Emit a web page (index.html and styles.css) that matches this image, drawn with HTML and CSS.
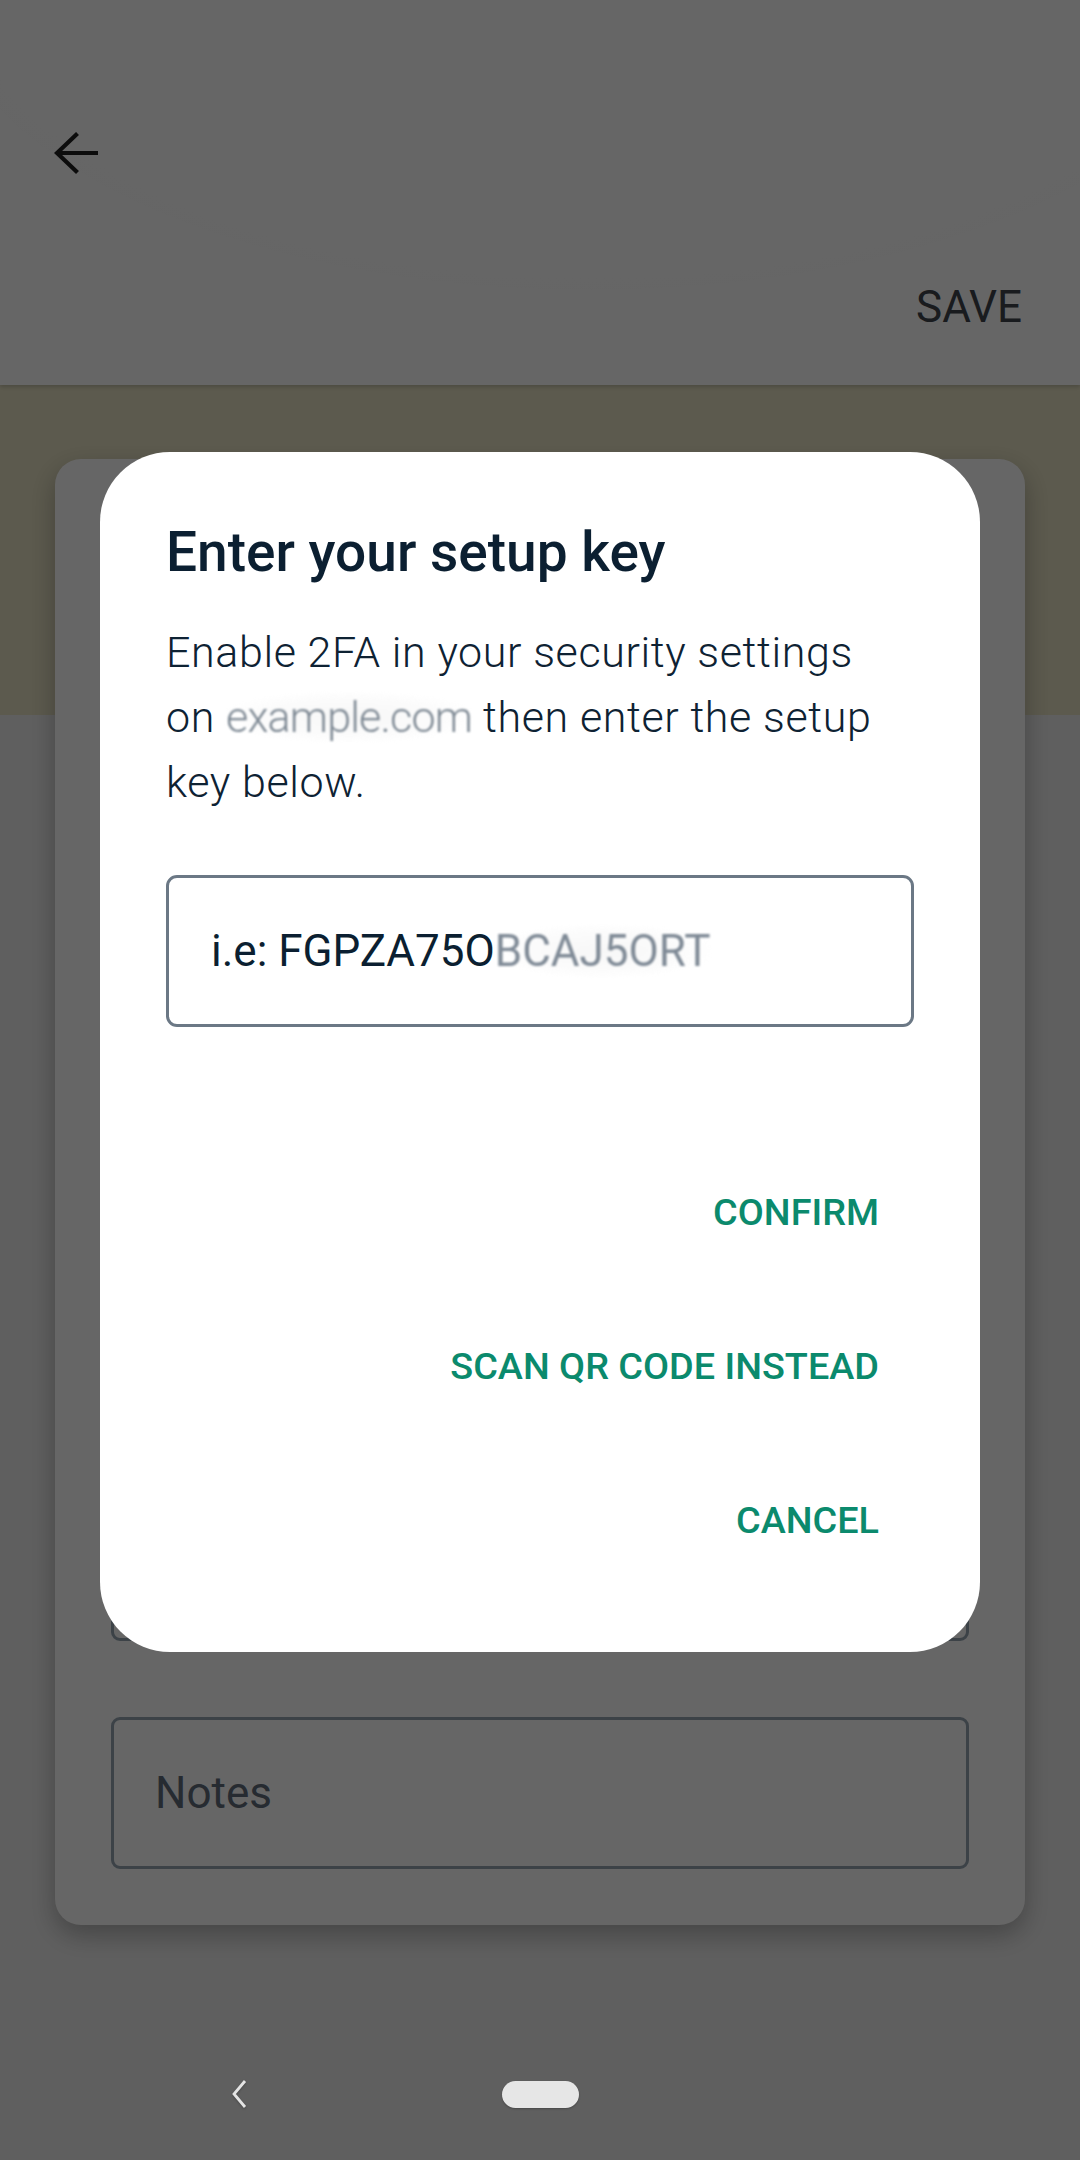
FILE: index.html
```html
<!DOCTYPE html>
<html lang="en">
<head>
<meta charset="utf-8">
<title>Enter your setup key</title>
<link rel="stylesheet" href="styles.css">
</head>
<body>
<div class="screen">
  <header class="appbar">
    <div class="appbar-glow"></div>
    <button class="icon-btn" aria-label="Back">
      <svg class="back-icon" viewBox="0 0 46 44" width="46" height="44">
        <path d="M44 21H3M23.5 1.5L3 21L23.5 40.5" fill="none" stroke="#202020" stroke-width="4.2" stroke-linecap="butt" stroke-linejoin="miter"/>
      </svg>
    </button>
    <div class="appbar-actions">
      <span class="save">SAVE</span>
    </div>
  </header>

  <main class="content">
    <section class="card">
      <div class="field"></div>
      <div class="field"></div>
      <div class="field"></div>
      <div class="field"></div>
      <div class="field"></div>
      <div class="field notes"><span class="field-label">Notes</span></div>
    </section>
  </main>

  <nav class="navbar">
    <svg class="nav-back" viewBox="0 0 18 30" width="18" height="30">
      <path d="M15 2L4 15L15 28" fill="none" stroke="#e4e4e4" stroke-width="2.8"/>
    </svg>
    <span class="nav-home"></span>
    <span></span>
  </nav>
</div>

<div class="scrim">
  <div class="dialog" role="dialog">
    <h1 class="dialog-title">Enter your setup key</h1>
    <p class="dialog-body"><span class="line">Enable 2FA in your security settings</span> <span class="line">on</span> <span class="redacted">example.com</span> <span class="line">then enter the setup</span> <span class="line">key below.</span></p>
    <div class="input">
      <span class="input-text">i.e: FGPZA75O</span><span class="redacted redacted-key">BCAJ5ORT</span>
    </div>
    <div class="actions">
      <button class="text-btn">CONFIRM</button>
      <button class="text-btn">SCAN QR CODE INSTEAD</button>
      <button class="text-btn">CANCEL</button>
    </div>
  </div>
</div>
</body>
</html>
```

FILE: styles.css
```css
* {
  box-sizing: border-box;
}

html, body {
  margin: 0;
  padding: 0;
}

body {
  width: 1080px;
  height: 2160px;
  overflow: hidden;
  font-family: "Roboto", "Noto Sans", sans-serif;
  background: #eeeeee;
}

.screen {
  height: 2160px;
  display: flex;
  flex-direction: column;
}

/* ---------- app bar ---------- */
.appbar {
  position: relative;
  height: 385px;
  flex: none;
  background: #ffffff;
  box-shadow: 0 2px 4px rgba(0, 0, 0, 0.18);
  padding-top: 132px;
  z-index: 1;
  overflow: hidden;
}

.appbar-glow {
  position: absolute;
  left: -60px;
  top: -330px;
  width: 1300px;
  height: 620px;
  border-radius: 50%;
  background: radial-gradient(ellipse at center, #ffffff 60%, #fafafa 100%);
}

.icon-btn {
  position: relative;
  display: block;
  margin: 0 0 0 54px;
  padding: 0;
  border: 0;
  background: none;
  width: 46px;
  height: 44px;
}

.back-icon {
  display: block;
}

.appbar-actions {
  position: relative;
  display: flex;
  justify-content: flex-end;
  padding-right: 58px;
  margin-top: 105px;
}

.save {
  font-size: 44px;
  line-height: 52px;
  font-weight: 400;
  color: #40454c;
}

/* ---------- content ---------- */
.content {
  flex: 1;
  background: linear-gradient(to bottom, #e6e1c3 0, #e6e1c3 330px, #eeeeee 330px);
  padding: 74px 55px 0;
}

.card {
  background: #ffffff;
  border-radius: 26px;
  box-shadow: 0 10px 26px rgba(0, 0, 0, 0.28);
  padding: 118px 56px 56px;
  display: flex;
  flex-direction: column;
  gap: 76px;
}

.field {
  height: 152px;
  border: 3px solid #96a5b2;
  border-radius: 9px;
  display: flex;
  align-items: center;
  padding-left: 41px;
}

.field-label {
  font-size: 44px;
  color: #5f6b7a;
  font-weight: 400;
}

/* ---------- nav bar ---------- */
.navbar {
  position: relative;
  z-index: 20;
  height: 132px;
  flex: none;
  display: grid;
  grid-template-columns: 1fr 76px 1fr;
  align-items: start;
  padding-top: 53px;
}

.nav-back {
  justify-self: end;
  margin-right: 254px;
  margin-top: -2px;
  filter: drop-shadow(0 1px 1px rgba(0, 0, 0, 0.25));
}

.nav-home {
  width: 77px;
  height: 27px;
  border-radius: 14px;
  background: #e6e6e6;
  box-shadow: 0 1px 2px rgba(0, 0, 0, 0.25);
}

/* ---------- dialog ---------- */
.scrim {
  position: fixed;
  inset: 0;
  z-index: 10;
  background: rgba(0, 0, 0, 0.6);
  display: flex;
  justify-content: center;
  align-items: flex-start;
  padding-top: 452px;
}

.dialog {
  width: 880px;
  background: #ffffff;
  border-radius: 70px;
  padding: 67px 66px 66px;
  display: flex;
  flex-direction: column;
}

.dialog-title {
  margin: 0;
  font-size: 55px;
  line-height: 66px;
  font-weight: 500;
  color: #0b1f31;
}

.dialog-body {
  margin: 35px 0 0;
  padding-right: 26px;
  font-size: 43px;
  line-height: 65px;
  font-weight: 300;
  letter-spacing: 0.6px;
  color: #0e2233;
}

.line {
  white-space: nowrap;
}

.redacted {
  color: #7d8893;
  letter-spacing: -0.8px;
  filter: blur(0.9px);
  background: radial-gradient(ellipse at center, #f7f7f7 0%, #fcfcfc 55%, rgba(255, 255, 255, 0) 75%);
}

.input {
  margin-top: 60px;
  height: 152px;
  border: 3px solid #6b7885;
  border-radius: 11px;
  display: flex;
  align-items: center;
  padding-left: 42px;
  white-space: nowrap;
}

.input-text {
  font-size: 44px;
  font-weight: 400;
  color: #0b1f31;
}

.redacted-key {
  font-size: 44px;
  letter-spacing: 0;
  color: #7f8a96;
}

.actions {
  margin-top: 119px;
  display: flex;
  flex-direction: column;
  align-items: flex-end;
  gap: 22px;
  padding-right: 35px;
}

.text-btn {
  height: 132px;
  display: flex;
  align-items: center;
  border: 0;
  background: none;
  padding: 0;
  font-family: "Roboto", "Noto Sans", sans-serif;
  font-size: 37.8px;
  font-weight: 500;
  color: #0b8a6d;
  letter-spacing: 0;
}
```
